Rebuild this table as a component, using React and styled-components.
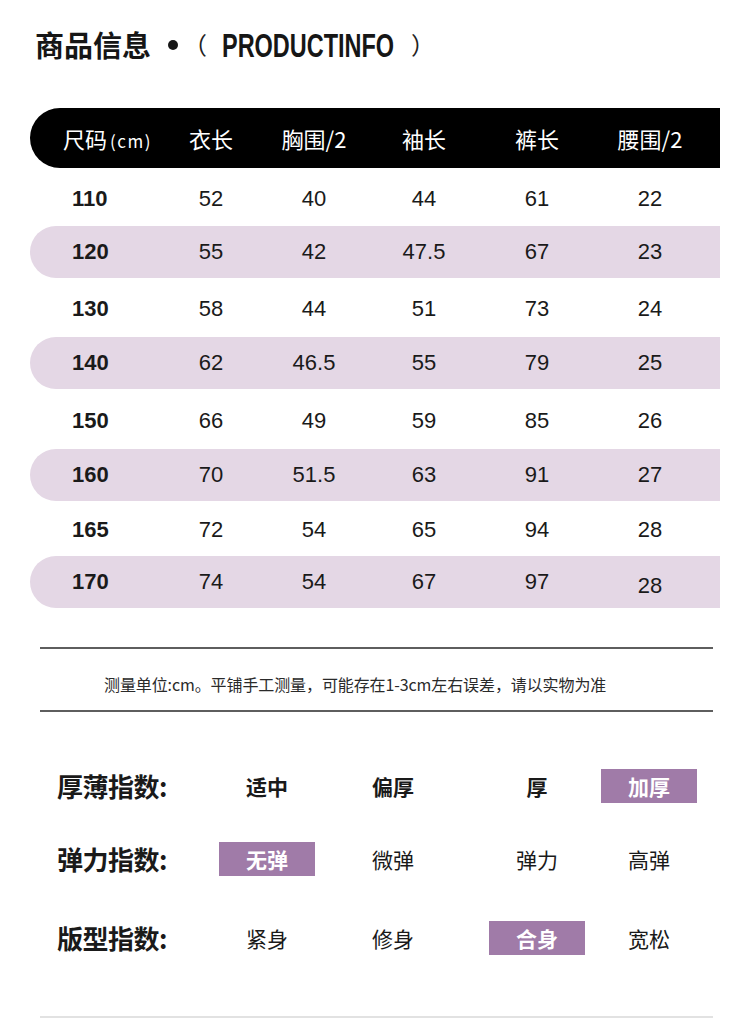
import React from "react";
import styled, { createGlobalStyle } from "styled-components";

const GlobalStyle = createGlobalStyle`
  body {
    margin: 0;
    background: #ffffff;
    font-family: "Noto Sans CJK SC", "Liberation Sans", sans-serif;
    color: #1a1a1a;
  }
`;

// STYLED COMPONENTS
const Page = styled.div`
  width: 750px;
  height: 1018px;
  overflow: hidden;
  background: #ffffff;
`;
const Title = styled.h1`
  margin: 0;
  padding: 26px 0 0 35px;
  height: 36px;
  display: flex;
  align-items: center;
  font-size: 29px;
  font-weight: 700;
  line-height: 36px;
  color: #161616;
`;
const Dot = styled.span`
  width: 10px;
  height: 10px;
  border-radius: 50%;
  background: #161616;
  margin: 2px 5px 0 17px;
`;
const Paren = styled.span`
  font-weight: 400;
  font-size: 24px;
  color: #222;
`;
const TitleEn = styled.span`
  display: inline-block;
  font-family: "Liberation Sans", Arial, sans-serif;
  font-weight: 700;
  font-size: 34px;
  width: 176px;
  margin: 2px 13px 0 15px;
  transform: scaleX(0.69);
  transform-origin: left center;
  white-space: nowrap;
`;

const SizeTable = styled.div`
  margin: 46px 30px 0 30px;
  width: 690px;
`;
const Row = styled.div`
  display: grid;
  grid-template-columns: 118px 126px 80px 140px 86px 140px;
  align-items: center;
  height: ${(p) => p.$h}px;
  padding-top: ${(p) => (p.$band ? 0 : 3)}px;
  box-sizing: border-box;
  background: ${(p) => (p.$band ? "#e4d7e5" : "transparent")};
  border-radius: ${(p) => p.$h / 2}px 0 0 ${(p) => p.$h / 2}px;
`;
const HeadRow = styled(Row)`
  padding-top: 0;
  background: #000000;
  color: #ffffff;
`;
const HeadCell = styled.div`
  font-size: 22px;
  text-align: ${(p) => (p.$first ? "left" : "center")};
  padding-left: ${(p) => (p.$first ? "33px" : "0")};
  white-space: nowrap;
`;
const Unit = styled.span`
  font-size: 17px;
  letter-spacing: 1.5px;
  margin-left: 3px;
`;
const Cell = styled.div`
  font-family: "Liberation Sans", Arial, sans-serif;
  font-size: 22px;
  font-weight: ${(p) => (p.$first ? 700 : 400)};
  text-align: ${(p) => (p.$first ? "left" : "center")};
  padding-left: ${(p) => (p.$first ? "42px" : "0")};
  color: #1a1a1a;
  position: relative;
  top: ${(p) => p.$dy || 0}px;
`;

const Rule = styled.div`
  margin: ${(p) => p.$mt || 0}px 37px 0 40px;
  height: 2px;
  background: ${(p) => p.$color || "#5e5e5e"};
`;
const Note = styled.p`
  margin: 0;
  padding: 23px 0 14px 104px;
  font-size: 16px;
  line-height: 24px;
  color: #2a2a2a;
  letter-spacing: -0.1px;
`;

const IndexSection = styled.div`
  padding: 57px 0 0 57px;
`;
const IndexRow = styled.div`
  display: grid;
  grid-template-columns: 162px 126px 144px 112px 96px;
  align-items: center;
  height: 34px;
  margin-top: ${(p) => p.$mt || 0}px;
`;
const IndexLabel = styled.div`
  font-size: 26px;
  line-height: 34px;
  font-weight: 700;
  color: #1a1a1a;
  white-space: nowrap;
  letter-spacing: -0.5px;
`;
const Option = styled.div`
  width: 96px;
  height: 34px;
  display: flex;
  align-items: center;
  justify-content: center;
  font-size: 21px;
  line-height: 34px;
  font-weight: ${(p) => (p.$on || p.$strong ? 700 : 400)};
  color: ${(p) => (p.$on ? "#ffffff" : "#1a1a1a")};
  background: ${(p) => (p.$on ? "#a07ba8" : "transparent")};
`;

const headers = ["衣长", "胸围/2", "袖长", "裤长", "腰围/2"];
const rows = [
  { size: "110", v: ["52", "40", "44", "61", "22"], h: 58 },
  { size: "120", v: ["55", "42", "47.5", "67", "23"], h: 52, band: true },
  { size: "130", v: ["58", "44", "51", "73", "24"], h: 59 },
  { size: "140", v: ["62", "46.5", "55", "79", "25"], h: 52, band: true },
  { size: "150", v: ["66", "49", "59", "85", "26"], h: 60 },
  { size: "160", v: ["70", "51.5", "63", "91", "27"], h: 52, band: true },
  { size: "165", v: ["72", "54", "65", "94", "28"], h: 55 },
  { size: "170", v: ["74", "54", "67", "97", "28"], h: 52, band: true, lastDrop: true },
];

const indices = [
  { label: "厚薄指数:", opts: ["适中", "偏厚", "厚", "加厚"], on: 3, strong: true, mt: 0 },
  { label: "弹力指数:", opts: ["无弹", "微弹", "弹力", "高弹"], on: 0, mt: 39 },
  { label: "版型指数:", opts: ["紧身", "修身", "合身", "宽松"], on: 2, mt: 45 },
];

export default function App() {
  return (
    <Page>
      <GlobalStyle />
      <Title>
        商品信息
        <Dot />
        <Paren>（</Paren>
        <TitleEn>PRODUCTINFO</TitleEn>
        <Paren>）</Paren>
      </Title>

      <SizeTable>
        <HeadRow $h={60}>
          <HeadCell $first>
            尺码<Unit>(cm)</Unit>
          </HeadCell>
          {headers.map((t) => (
            <HeadCell key={t}>{t}</HeadCell>
          ))}
        </HeadRow>
        {rows.map((r) => (
          <Row key={r.size} $h={r.h} $band={r.band}>
            <Cell $first>{r.size}</Cell>
            {r.v.map((v, i) => (
              <Cell key={i} $dy={r.lastDrop && i === 4 ? 4 : 0}>
                {v}
              </Cell>
            ))}
          </Row>
        ))}
      </SizeTable>

      <Rule $mt={39} />
      <Note>测量单位:cm。平铺手工测量，可能存在1-3cm左右误差，请以实物为准</Note>
      <Rule />

      <IndexSection>
        {indices.map((row) => (
          <IndexRow key={row.label} $mt={row.mt}>
            <IndexLabel>{row.label}</IndexLabel>
            {row.opts.map((o, i) => (
              <Option key={o} $on={i === row.on} $strong={row.strong}>
                {o}
              </Option>
            ))}
          </IndexRow>
        ))}
      </IndexSection>
      <Rule $mt={61} $color="#e2e2e2" />
    </Page>
  );
}
